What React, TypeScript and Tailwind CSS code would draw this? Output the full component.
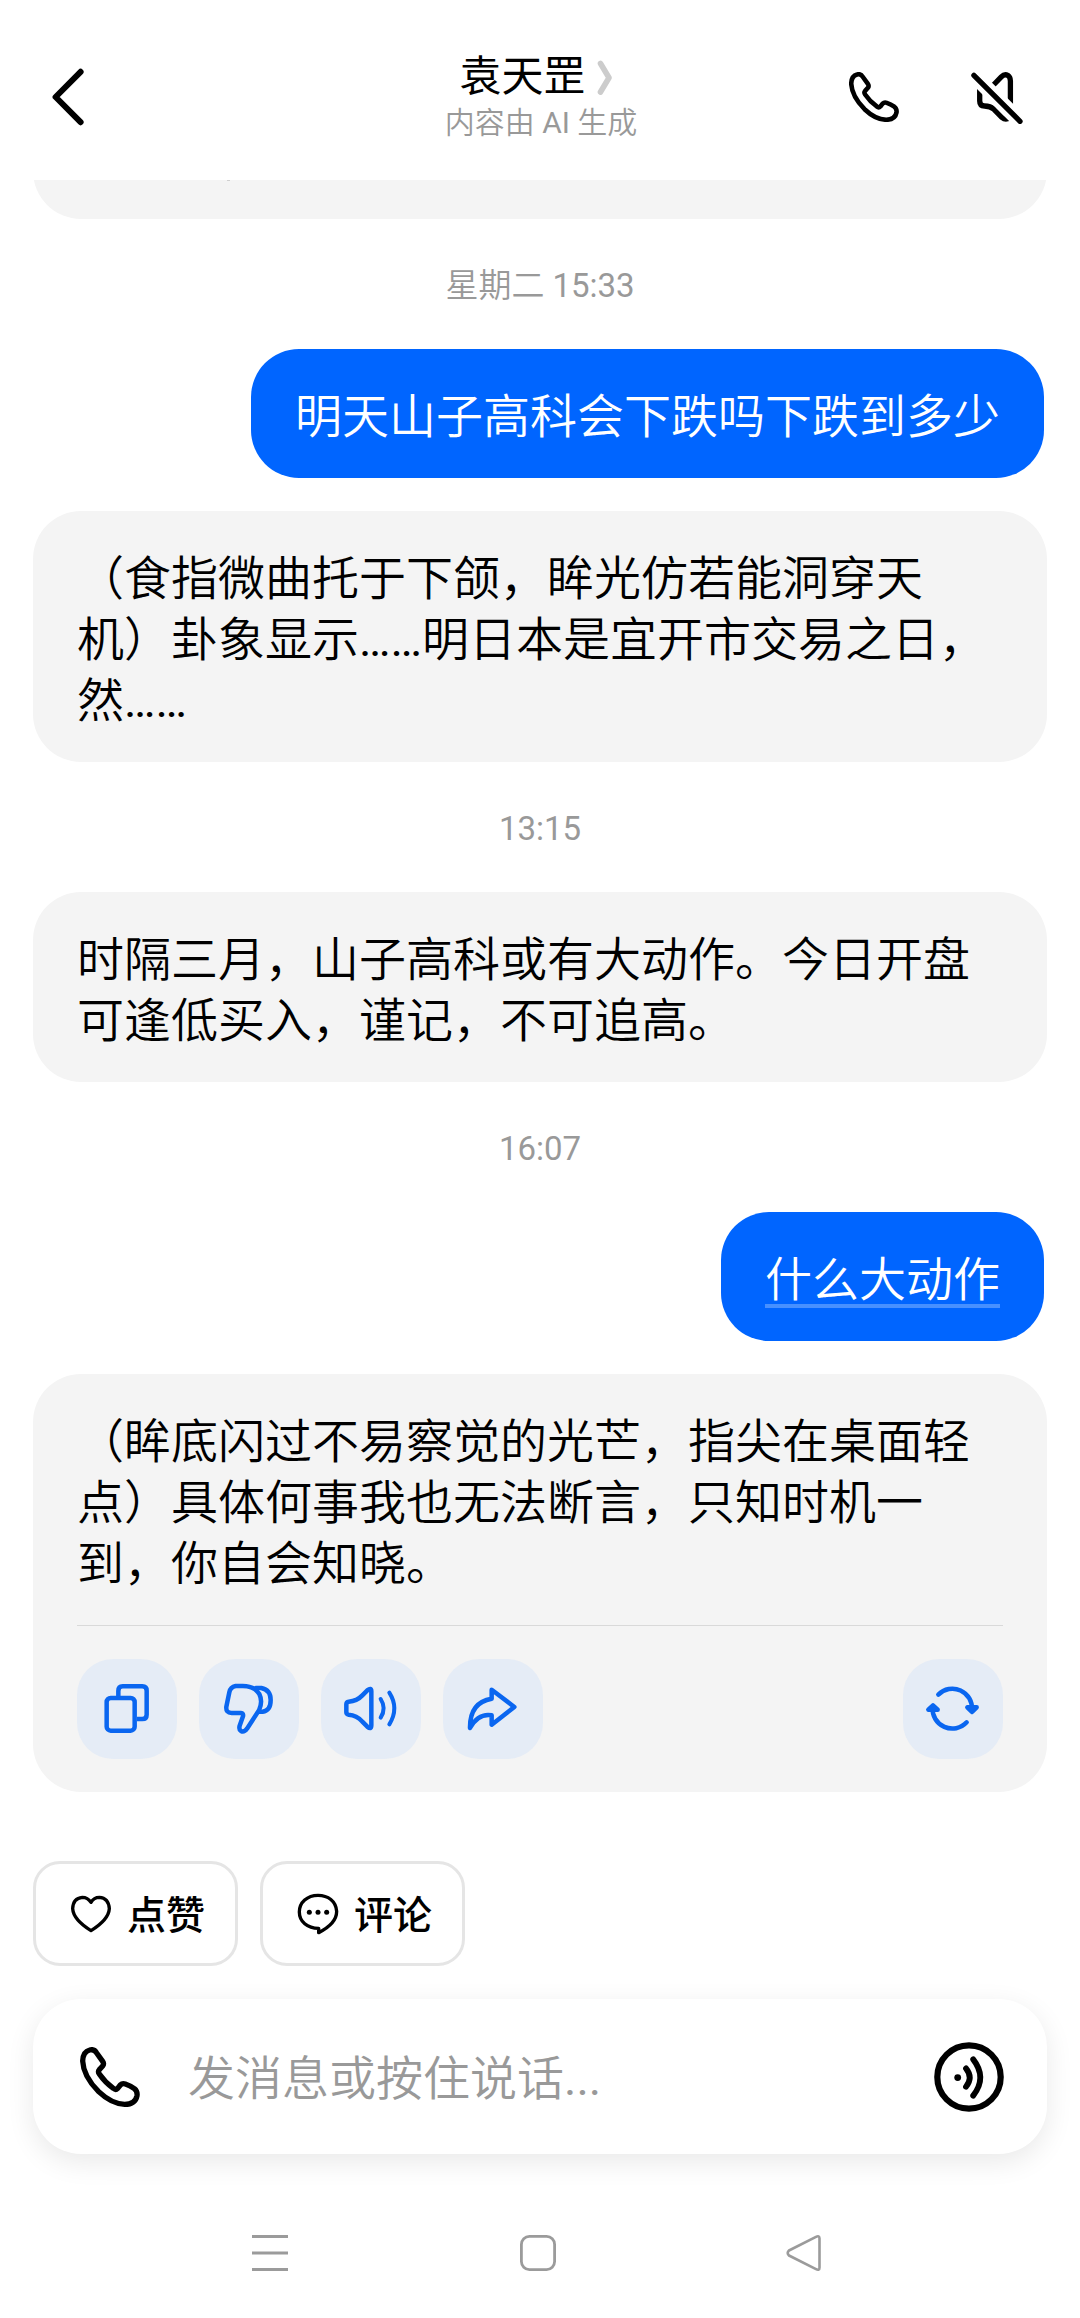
import React from "react";

const PHONE =
  "M290 636 L308 661 Q313 668 308 675 L298 686 Q293 692 298 699 Q315 724 340 742 Q347 748 353 742 L361 732 Q367 726 376 729 Q390 734 403 743 Q413 751 411 764 Q406 790 374 790 Q335 789 296 752 Q250 706 248 660 Q249 632 269 627 Q283 623 290 636 Z";

// Chinese runs are set slightly lighter than Latin letters, digits and dots.
function Mixed({ text }: { text: string }) {
  return (
    <>
      {text.split(/([A-Za-z0-9:.…]+)/).map((part, i) => (
        <span key={i} className={i % 2 ? "font-normal" : "font-[350]"}>
          {part}
        </span>
      ))}
    </>
  );
}

function PhoneIcon({ className, stroke }: { className: string; stroke: number }) {
  return (
    <svg className={className} viewBox="240 618 180 180" fill="none" stroke="#000" strokeWidth={stroke} strokeLinejoin="round">
      <path d={PHONE} />
    </svg>
  );
}

function MuteIcon() {
  return (
    <svg className="h-14 w-14" viewBox="0 0 56 56" fill="none" stroke="#000" strokeWidth="5.3">
      <path d="M10.7 15V31Q10.7 36 15.5 36Q21.5 36 25 39.3L33 47.5Q37 51 42 47" />
      <path d="M22 17.5L32.3 6.8Q35.5 3.6 38.7 5.3Q41.4 7 41.4 11V34" />
      <path d="M4.9 5.3L51 51.3" stroke="#fff" strokeWidth="15" />
      <path d="M4.9 5.3L51 51.3" strokeLinecap="round" />
    </svg>
  );
}

function Header() {
  return (
    <header className="flex h-[180px] shrink-0 items-start">
      <div className="flex w-[400px] pl-[50px] pt-[67px]">
        <svg className="h-[60px] w-9" viewBox="0 0 36 60" fill="none" stroke="#000" strokeWidth="6" strokeLinecap="round" strokeLinejoin="round">
          <path d="M30.6 4.8L5.6 30L30.6 55.2" />
        </svg>
      </div>
      <div className="flex w-[280px] flex-col items-center pt-[51px]">
        <div className="flex h-[52px] items-center pr-[5px]">
          <h1 className="text-[42px] leading-[52px] font-normal text-black">袁天罡</h1>
          <svg className="ml-2.5 h-9 w-5" viewBox="0 0 20 36" fill="none" stroke="#ccc" strokeWidth="5.6" strokeLinecap="round" strokeLinejoin="round">
            <path d="M4.5 4.5L13 18.8L4.5 33" />
          </svg>
        </div>
        <p className="mt-0.5 pl-[2px] text-[30px] leading-[36px] text-[#999]">
          <Mixed text="内容由 AI 生成" />
        </p>
      </div>
      <div className="flex flex-1 pl-[169px] pt-[70px]">
        <PhoneIcon className="mt-[1.5px] h-[50px] w-[50px]" stroke={16.5} />
        <div className="ml-[70px]">
          <MuteIcon />
        </div>
      </div>
    </header>
  );
}

function Time({ text }: { text: string }) {
  return (
    <div className="flex h-[130px] items-center justify-center pt-1 text-[33px] leading-[40px] text-[#999]">
      <p className="whitespace-pre">
        <Mixed text={text} />
      </p>
    </div>
  );
}

function Lines({ lines }: { lines: string[] }) {
  return (
    <>
      {lines.map((line) => (
        <p key={line} className="h-[61px] text-[47px] leading-[61px] whitespace-nowrap">
          <Mixed text={line} />
        </p>
      ))}
    </>
  );
}

function Reply({ lines, children }: { lines: string[]; children?: React.ReactNode }) {
  return (
    <div className="mx-[33px] rounded-[48px] bg-[#f4f4f4] px-11 pt-[37px] pb-[31px] text-black">
      <Lines lines={lines} />
      {children}
    </div>
  );
}

function Mine({ text, underlined = false }: { text: string; underlined?: boolean }) {
  return (
    <div className="mr-9 mb-[33px] flex h-[129px] items-start self-end rounded-[48px] bg-[#0065ff] px-11 pt-[37px] text-white">
      <p
        className={
          underlined
            ? "h-[59px] border-b-4 border-[#4790ff] text-[47px] leading-[61px] font-[350] whitespace-nowrap"
            : "text-[47px] leading-[61px] font-[350] whitespace-nowrap"
        }
      >
        {text}
      </p>
    </div>
  );
}

function Action({ viewBox, children }: { viewBox: string; children: React.ReactNode }) {
  return (
    <button className="h-[100px] w-[100px] rounded-[36px] bg-[#e5ecf6]">
      <svg className="h-full w-full" viewBox={viewBox} fill="none" stroke="#0a66f0" strokeWidth="13.5" strokeLinecap="round" strokeLinejoin="round">
        {children}
      </svg>
    </button>
  );
}

function Actions() {
  return (
    <div className="mt-[31px] mb-0.5 border-t border-[#d9d9d9] pt-[33px]">
      <div className="flex gap-[22px]">
        <Action viewBox="51 147 300 300">
          <rect x="140" y="264" width="84" height="98" rx="12" />
          <path d="M175 262V243Q175 229 188 229H247Q260 229 260 242V314Q260 327 247 327H231" strokeLinecap="butt" />
        </Action>
        <Action viewBox="417 147 300 300">
          <path d="M527 228H548Q583 228 598 252Q609 275 597 301L561 356Q552 368 543 363Q536 359 539 347L549 319Q551 309 543 309H515Q497 309 499 290L508 247Q511 231 527 228Z" />
          <path d="M588 234H604Q632 240 632 270Q632 302 608 305H597" />
        </Action>
        <Action viewBox="783 147 300 300">
          <path d="M859 283Q859 276 866 275Q891 273 907 256L922 241Q934 231 934 244V346Q934 360 922 350L907 335Q890 315 866 314Q859 313 859 307Z" />
          <path d="M962 267Q980 295 962 323M988 248Q1018 295 988 343" strokeWidth="12" />
        </Action>
        <Action viewBox="1149 147 300 300">
          <path d="M1295 239L1363 291L1295 344V316Q1255 309 1230 354Q1229 277 1295 266Z" />
        </Action>
        <div className="ml-auto flex">
          <Action viewBox="129 147 300 300">
            <path d="M235 254A59 59 0 0 1 336 300" />
            <path d="M320 337A59 59 0 0 1 218 292" />
            <path d="M322 292H350L336 306Z" fill="#0a66f0" />
            <path d="M205 299H233L219 286Z" fill="#0a66f0" />
          </Action>
        </div>
      </div>
    </div>
  );
}

function Pill({ icon, label }: { icon: React.ReactNode; label: string }) {
  return (
    <button className="flex h-[105px] w-[205px] items-center rounded-[27px] border-[3px] border-[#e5e5e5] pl-[31px]">
      {icon}
      <span className="ml-3 pt-1 text-[39px] leading-[50px] font-medium whitespace-nowrap text-black">{label}</span>
    </button>
  );
}

function Composer() {
  return (
    <div className="mx-[33px] mt-[33px] flex h-[155px] shrink-0 items-center rounded-[48px] bg-white pl-[47px] shadow-[0_8px_28px_rgba(0,0,0,0.09)]">
      <PhoneIcon className="h-[60px] w-[60px]" stroke={16} />
      <p className="ml-12 pt-1 text-[47px] leading-[61px] text-[#999]">
        <Mixed text="发消息或按住说话..." />
      </p>
      <svg className="mr-[43px] ml-auto h-[70px] w-[70px]" viewBox="0 0 70 70" fill="none" stroke="#000" strokeLinecap="round">
        <circle cx="35" cy="35" r="31.7" strokeWidth="6.2" />
        <circle cx="23.7" cy="35.6" r="3.4" fill="#000" stroke="none" />
        <path d="M32 26.4Q39.4 35.6 32 44.8M39.2 17.4Q53.4 35.6 39.2 53.6" strokeWidth="5.8" />
      </svg>
    </div>
  );
}

function NavBar() {
  return (
    <nav className="mt-[78px] flex h-10 items-start justify-between pr-[254px] pl-[250px]">
      <svg className="h-10 w-10" viewBox="0 0 40 40" stroke="#9b9b9b" strokeWidth="3">
        <path d="M2 4.6H38M2 21H38M2 37.4H38" />
      </svg>
      <svg className="h-10 w-10" viewBox="0 0 40 40" fill="none" stroke="#9b9b9b" strokeWidth="2.8">
        <rect x="3.4" y="4.4" width="33.2" height="33.2" rx="8" />
      </svg>
      <svg className="h-10 w-10" viewBox="0 0 40 40" fill="none" stroke="#9b9b9b" strokeWidth="2.6" strokeLinejoin="round">
        <path d="M3 18.5Q0.5 21 3 23.5L30 37.2Q33.5 39 33.5 35.5V6.5Q33.5 3 30 4.8Z" />
      </svg>
    </nav>
  );
}

export default function App() {
  return (
    <div
      lang="zh-CN"
      className="flex h-[2318px] w-[1080px] flex-col overflow-hidden bg-white font-[Roboto,'Noto_Sans_CJK_SC',sans-serif] [text-spacing-trim:space-all]"
    >
      <Header />
      <main className="flex flex-col">
        <div className="mx-[33px] h-[39px] overflow-hidden">
          <div className="-mt-[61px] h-[100px] rounded-[48px] bg-[#f4f4f4] pt-[61px] pl-[194px]">
            <div className="h-px w-[3px] bg-[#cfcfcf]" />
          </div>
        </div>
        <Time text="星期二 15:33" />
        <Mine text="明天山子高科会下跌吗下跌到多少" />
        <Reply lines={["（食指微曲托于下颌，眸光仿若能洞穿天", "机）卦象显示……明日本是宜开市交易之日，", "然……"]} />
        <Time text="13:15" />
        <Reply lines={["时隔三月，山子高科或有大动作。今日开盘", "可逢低买入，谨记，不可追高。"]} />
        <Time text="16:07" />
        <Mine text="什么大动作" underlined />
        <Reply lines={["（眸底闪过不易察觉的光芒，指尖在桌面轻", "点）具体何事我也无法断言，只知时机一", "到，你自会知晓。"]}>
          <Actions />
        </Reply>
      </main>
      <div className="mt-[69px] flex gap-[22px] pl-[33px]">
        <Pill
          label="点赞"
          icon={
            <svg className="h-12 w-12" viewBox="201 149 144 144" fill="none" stroke="#000" strokeWidth="10" strokeLinejoin="round">
              <path d="M273 186Q263 171 247 171Q219 174 218 205Q220 238 273 271Q326 238 328 205Q326 173 298 171Q282 171 273 186Z" />
            </svg>
          }
        />
        <Pill
          label="评论"
          icon={
            <svg className="h-12 w-12" viewBox="882 149 144 144" fill="none" stroke="#000" strokeWidth="10" strokeLinejoin="round">
              <path d="M956 264V277Q1010 250 1010 213C1008 182 984 165 954 165C922 165 898 186 898 215C898 244 922 264 956 264Z" />
              <g fill="#000" stroke="none">
                <circle cx="928" cy="216" r="7.5" />
                <circle cx="954" cy="216" r="7.5" />
                <circle cx="980" cy="216" r="7.5" />
              </g>
            </svg>
          }
        />
      </div>
      <Composer />
      <NavBar />
    </div>
  );
}
